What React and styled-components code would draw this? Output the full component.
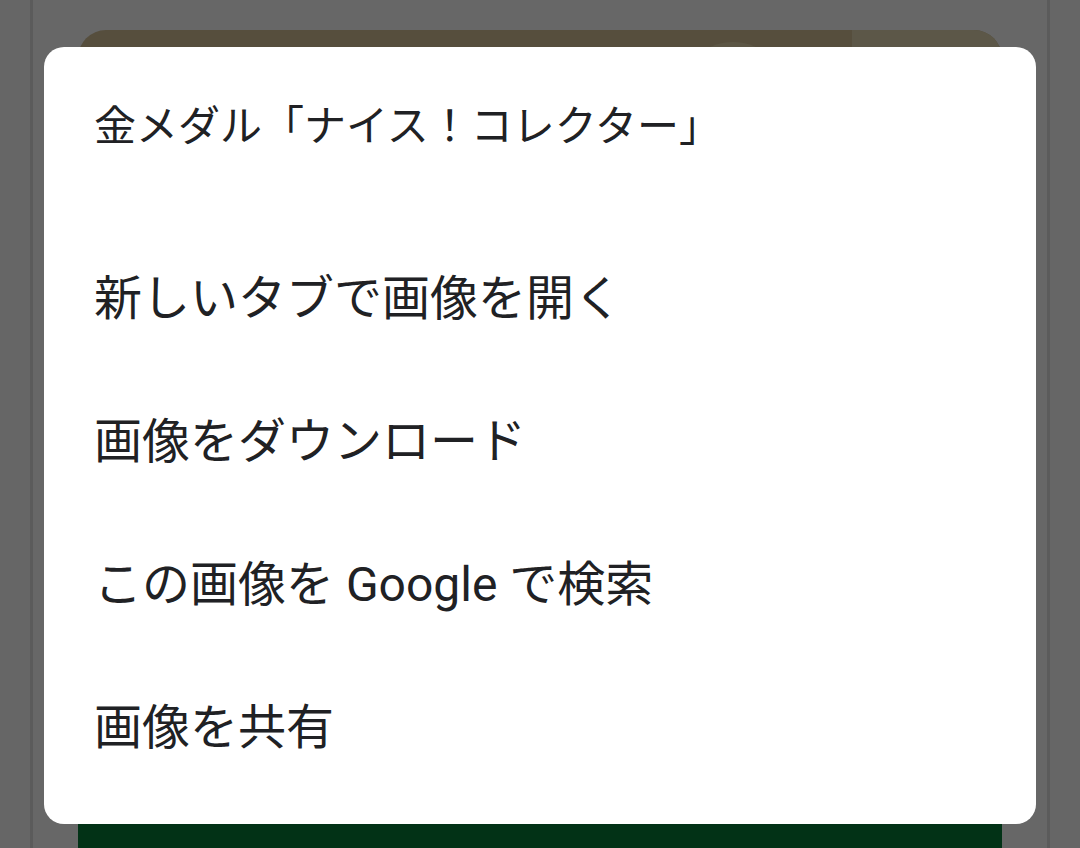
import React from 'react';
import styled, { createGlobalStyle } from 'styled-components';

const items = ['新しいタブで画像を開く', '画像をダウンロード', 'この画像を Google で検索', '画像を共有'];

export default function App() {
  return (
    <>
      <GlobalStyle />
      <Page>
        <Column>
          <Card>
            <ImageArea>
              <Blob />
              <SidePanel />
            </ImageArea>
            <GreenArea />
          </Card>
        </Column>
      </Page>
      <Dialog role="menu">
        <Title>金メダル「ナイス！コレクター」</Title>
        <List>
          {items.map(label => (
            <Item key={label} role="menuitem">
              {label}
            </Item>
          ))}
        </List>
      </Dialog>
    </>
  );
}

const GlobalStyle = createGlobalStyle`
  html, body {
    margin: 0;
    padding: 0;
    background: #666666;
    overflow: hidden;
  }
  body {
    font-family: Roboto, "Noto Sans CJK JP", sans-serif;
  }
`;

const Page = styled.div`
  width: 1080px;
  height: 848px;
  display: flex;
  background: #666666;
  overflow: hidden;
`;

const Column = styled.div`
  flex: 1;
  margin: 0 30px;
  border-left: 3px solid #5b5b5b;
  border-right: 3px solid #5b5b5b;
  background: #676767;
  padding: 30px 45px 0;
  display: flex;
  flex-direction: column;
`;

const Card = styled.div`
  border-radius: 28px 28px 0 0;
  overflow: hidden;
  display: flex;
  flex-direction: column;
`;

const ImageArea = styled.div`
  height: 520px;
  background: #564e3d;
  position: relative;
  display: flex;
  justify-content: flex-end;
`;

const Blob = styled.div`
  position: absolute;
  left: 600px;
  top: 12px;
  width: 110px;
  height: 110px;
  border-radius: 50%;
  background: #5c5645;
`;

const SidePanel = styled.div`
  width: 150px;
  background: #5c5748;
`;

const GreenArea = styled.div`
  height: 400px;
  background: #023216;
`;

const Dialog = styled.div`
  position: fixed;
  left: 44px;
  top: 47px;
  width: 992px;
  height: 777px;
  box-sizing: border-box;
  background: #ffffff;
  border-radius: 20px;
  padding: 0 50px;
  display: flex;
  flex-direction: column;
  color: #202124;
  font-family: Roboto, "Noto Sans CJK JP", sans-serif;
`;

const Title = styled.div`
  height: 150px;
  display: flex;
  align-items: center;
  font-size: 42px;
  white-space: nowrap;
`;

const List = styled.div`
  margin-top: 25px;
  display: flex;
  flex-direction: column;
`;

const Item = styled.div`
  height: 143px;
  display: flex;
  align-items: center;
  font-size: 48px;
  white-space: nowrap;
`;
